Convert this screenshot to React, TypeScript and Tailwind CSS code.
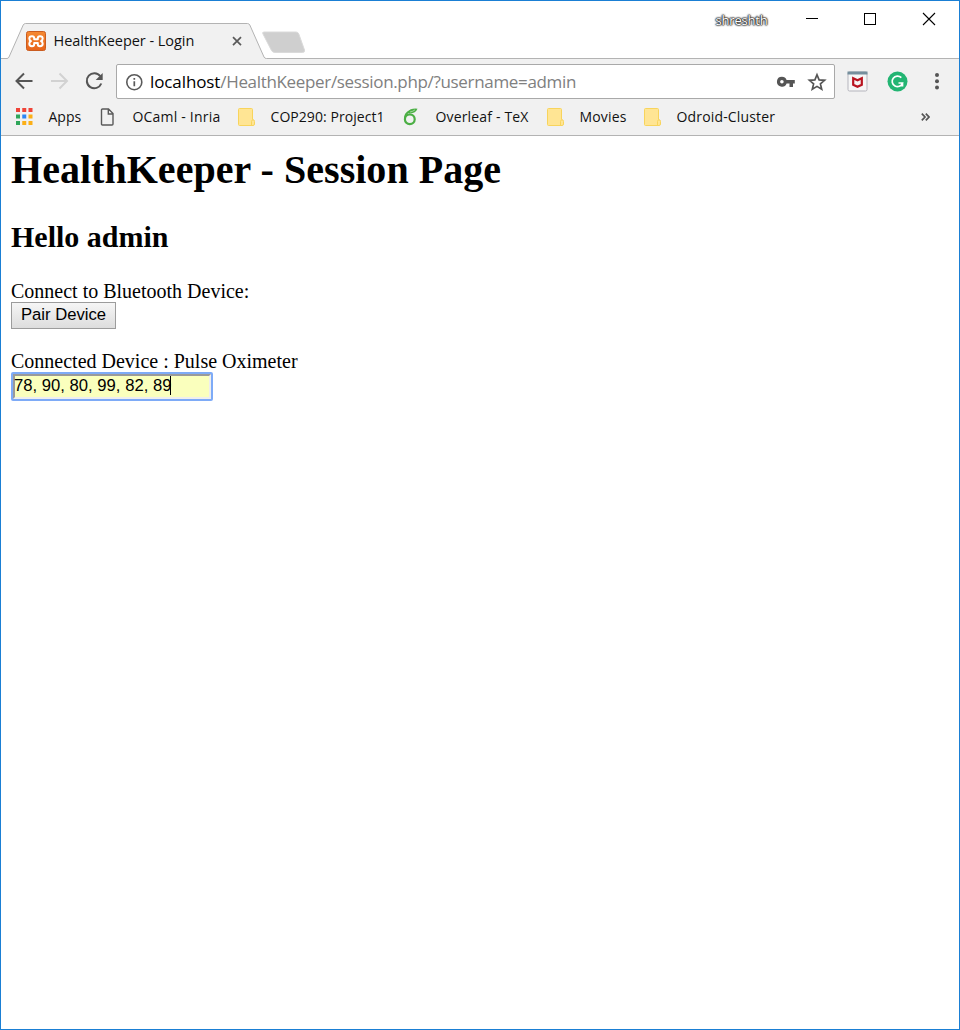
import React from "react";

const UI = "font-['Open_Sans','Noto_Sans',sans-serif]";

function TabStrip() {
  return (
    <div className="relative flex h-[57px] shrink-0 bg-white">
      <svg className="absolute left-0 top-0" width="958" height="58" viewBox="1 1 958 58">
        <defs>
          <linearGradient id="fav" x1="0" y1="0" x2="0" y2="1">
            <stop offset="0" stopColor="#f58a33" />
            <stop offset="1" stopColor="#e8641a" />
          </linearGradient>
        </defs>
        <path d="M1 58.5H7Q8.300 58.500 9 57L23.200 25Q24 23.500 25.500 23.500H247.500Q249 23.500 249.800 25L264 57Q264.700 58.500 266.500 58.500H959" fill="#f1f1f1" stroke="#b3b3b3" />
        <path d="M264 32H296Q298 32 298.800 34L304.500 50Q305 52.500 302.500 52.500H275Q272.500 52.500 271.500 50.500L263 34Q262 32 264 32Z" fill="#cfcfcf" stroke="#dadada" />
        <rect x="26.500" y="31.500" width="19" height="19" rx="2" fill="url(#fav)" stroke="#ca5c20" />
        <path d="M32 36.200Q34.200 36.200 34.200 38.200V39.300H37.800V38.200Q37.800 36.200 40 36.200Q42.700 36.200 42.700 38.600Q42.700 40.500 41 41.200Q42.700 41.900 42.700 43.800Q42.700 46.200 40 46.200Q37.800 46.200 37.800 44.200V43.100H34.200V44.200Q34.200 46.200 32 46.200Q29.300 46.200 29.300 43.800Q29.300 41.900 31 41.200Q29.300 40.500 29.300 38.600Q29.300 36.200 32 36.200Z" fill="none" stroke="#fff" strokeWidth="2" strokeLinejoin="round" />
        <path d="M233 37.200L241 45.200M241 37.200L233 45.200" stroke="#5a5a5a" strokeWidth="1.700" />
        <path d="M806 18.500H818" stroke="#000" />
        <rect x="864.500" y="13.500" width="11" height="11" fill="none" stroke="#000" />
        <path d="M923 13L935 25M935 13L923 25" stroke="#000" strokeWidth="1.100" />
      </svg>
      <span className={`${UI} relative ml-[52.5px] mt-[30px] h-5 w-[660.5px] whitespace-nowrap text-[14.5px] leading-5 tracking-[-0.04px] text-[#111]`}>HealthKeeper - Login</span>
      <span className={`${UI} relative ml-[1.5px] mt-[9px] h-5 whitespace-nowrap text-[13px] leading-5 tracking-[-0.2px] text-white [text-shadow:0_0_2px_#222,0_0_2px_#222,0_0_2px_#333,0_0_1px_#333,0_0_1px_#333]`}>shreshth</span>
    </div>
  );
}

function Toolbar() {
  return (
    <div className="relative mt-px flex h-[44px] shrink-0 items-start pl-[115px] pt-[5px]">
      <div className="flex h-[35px] w-[719px] items-center rounded-[2px] border border-[#a9a9a9] bg-white pl-[33px]">
        <span className={`${UI} whitespace-nowrap text-[17px] leading-6 tracking-[-0.335px] text-[#808080]`}>
          <span className="tracking-[-0.1px] text-black">localhost</span>/HealthKeeper/session.php/?username=admin
        </span>
      </div>
      <svg className="absolute left-0 top-0" width="958" height="44" viewBox="1 59 958 44" fill="none">
        <path d="M32.500 81H17M24 73.500L16.500 81L24 88.500" stroke="#555" strokeWidth="2" />
        <path d="M51 81H66.500M59.500 73.500L67 81L59.500 88.500" stroke="#d2d2d2" strokeWidth="2" />
        <path d="M100.300 76.200A7.500 7.500 0 1 0 101.300 83.500" stroke="#555" strokeWidth="2" />
        <path d="M102.700 73V80H95.700Z" fill="#555" />
        <circle cx="134.300" cy="82.200" r="7.500" stroke="#5a5a5a" strokeWidth="1.600" />
        <path d="M134.300 81.200V86.200M134.300 78V79.800" stroke="#5a5a5a" strokeWidth="1.700" />
        <path fillRule="evenodd" d="M781.900 76.700A5 5 0 1 0 786.600 83.500H789.500V87H793V83.500H794.800V79.900H786.600A5 5 0 0 0 781.900 76.700ZM781.900 80A1.800 1.800 0 1 1 781.900 83.600A1.800 1.800 0 0 1 781.900 80Z" fill="#555" />
        <path d="M817 74.800L819.100 79.900L824.600 80.300L820.400 83.900L821.700 89.300L817 86.400L812.300 89.300L813.600 83.900L809.400 80.300L814.900 79.900Z" stroke="#555" strokeWidth="1.700" />
        <rect x="848" y="72" width="19" height="19" rx="1.500" fill="#f6f6f6" stroke="#b5b5bd" />
        <rect x="847.500" y="71.500" width="20" height="3" fill="#758f9d" />
        <path d="M853.200 78.300L857.500 80.300L861.800 78.300V84.700L857.500 86.800L853.200 84.700Z" stroke="#b91420" strokeWidth="2.200" />
        <circle cx="897.500" cy="81.500" r="10" fill="#23b573" />
        <path d="M901.300 77.700A5.300 5.300 0 1 0 902.500 83H898.500M902.500 83V86.500" stroke="#fff" strokeWidth="1.700" />
        <circle cx="937" cy="75" r="2" fill="#555" />
        <circle cx="937" cy="81.300" r="2" fill="#555" />
        <circle cx="937" cy="87.500" r="2" fill="#555" />
      </svg>
    </div>
  );
}

function Folder() {
  return (
    <svg width="18" height="18" viewBox="0 0 18 18">
      <path d="M1.500 .5H13.500Q14.500 .5 14.500 1.500V11.500Q16.500 11.500 16.500 13.500V16Q16.500 17.500 15 17.500H1.500Q.5 17.500 .5 16.500V1.500Q.5 .5 1.500 .5Z" fill="#ffe594" stroke="#f8d45c" />
      <path d="M13.500 17V13.500Q13.500 12 14.800 12" stroke="#f8d45c" fill="none" />
    </svg>
  );
}

function AppsIcon() {
  const colors = ["#f04438", "#f04438", "#f04438", "#2fa65a", "#2b86f5", "#fbaf17", "#2fa65a", "#fbaf17", "#fbaf17"];
  return (
    <svg width="18" height="18" viewBox="0 0 18 18">
      {colors.map((c, i) => (
        <rect key={i} x={(i % 3) * 6.250} y={Math.floor(i / 3) * 6.500} width="4" height="4" fill={c} />
      ))}
    </svg>
  );
}

function PageIcon() {
  return (
    <svg width="15" height="18" viewBox="0 0 15 18" fill="none" stroke="#5a5a5a" strokeWidth="1.400">
      <path d="M2.500 1H8.500L13 5.500V16Q13 17 12 17H2.500Q1.500 17 1.500 16V2Q1.500 1 2.500 1ZM8.300 1V6H13" />
    </svg>
  );
}

function OverleafIcon() {
  return (
    <svg width="15" height="18" viewBox="0 0 15 18" fill="none" stroke="#4caf45">
      <circle cx="6.800" cy="11.300" r="4.900" strokeWidth="2.200" />
      <path d="M2 11Q1.500 5.500 7 3.200" strokeWidth="1.900" />
      <path d="M4.500 4Q7.500 0 14.500 .7Q12.500 5.500 6.500 5.200Z" fill="#4caf45" stroke="none" />
      <path d="M7 4Q10 3.500 12 1.800" stroke="#d6f0d4" strokeWidth=".6" />
    </svg>
  );
}

type Mark = { label: string; icon: React.ReactNode; text: string };

const bookmarks: Mark[] = [
  { label: "Apps", icon: <AppsIcon />, text: "w-[51px]" },
  { label: "OCaml - Inria", icon: <PageIcon />, text: "w-[105px] tracking-[0.2px]" },
  { label: "COP290: Project1", icon: <Folder />, text: "w-[132px] tracking-[0.06px]" },
  { label: "Overleaf - TeX", icon: <OverleafIcon />, text: "w-[111px] tracking-[0.16px]" },
  { label: "Movies", icon: <Folder />, text: "w-[64px] tracking-[0.16px]" },
  { label: "Odroid-Cluster", icon: <Folder />, text: "w-[244px] tracking-[0.16px]" },
];

function BookmarksBar() {
  return (
    <div className="flex h-[33px] shrink-0 items-center border-b border-[#b3b3b3] pb-[4px] pl-[15px]">
      {bookmarks.map((b) => (
        <React.Fragment key={b.label}>
          <span className="w-[32.5px] shrink-0">{b.icon}</span>
          <span className={`${UI} ${b.text} mr-[0.5px] shrink-0 whitespace-nowrap text-[14px] leading-5 text-[#111]`}>{b.label}</span>
        </React.Fragment>
      ))}
      <svg width="9" height="8" viewBox="0 0 9 8" fill="none" stroke="#555" strokeWidth="1.700">
        <path d="M.8 .7L4 4L.8 7.300M4.800 .7L8 4L4.800 7.300" />
      </svg>
    </div>
  );
}

function SessionPage() {
  return (
    <main className="flex grow flex-col items-start bg-white pl-[10px] pt-[11px] font-['Liberation_Serif',serif] text-[20px] leading-[23px] text-black">
      <h1 className="text-[40px] font-bold leading-[46px] tracking-[0.03px]">HealthKeeper - Session Page</h1>
      <h2 className="mt-[27px] text-[30px] font-bold leading-[34px]">Hello admin</h2>
      <p className="mt-[26px] h-[22px]">Connect to Bluetooth Device:</p>
      <button className="flex h-[27px] w-[105px] items-center justify-center border border-[#9c9c9c] bg-linear-to-b from-[#f6f6f6] to-[#dddddd] pb-[2px] font-['Liberation_Sans',sans-serif] text-[16.67px] leading-5">Pair Device</button>
      <p className="mt-[21px] h-[22px]">Connected Device : Pulse Oximeter</p>
      <div className="flex h-[29px] w-[202px] items-stretch rounded-[2px] border-2 border-[#7eabf7]">
        <div className="flex grow items-center border-2 border-l-[#9a9a9a] border-t-[#9a9a9a] border-r-[#eeeeee] border-b-[#eeeeee] bg-[#faffbd] pb-[2px] font-['Liberation_Sans',sans-serif] text-[16.67px] leading-5">
          <span className="-ml-px whitespace-nowrap">78, 90, 80, 99, 82, 89</span>
          <span className="-ml-px h-[19px] w-px bg-black" />
        </div>
      </div>
    </main>
  );
}

export default function App() {
  return (
    <div className="flex h-[1030px] w-[960px] flex-col overflow-hidden border border-[#1a7fd4] bg-[#f1f1f1]">
      <TabStrip />
      <Toolbar />
      <BookmarksBar />
      <SessionPage />
    </div>
  );
}
